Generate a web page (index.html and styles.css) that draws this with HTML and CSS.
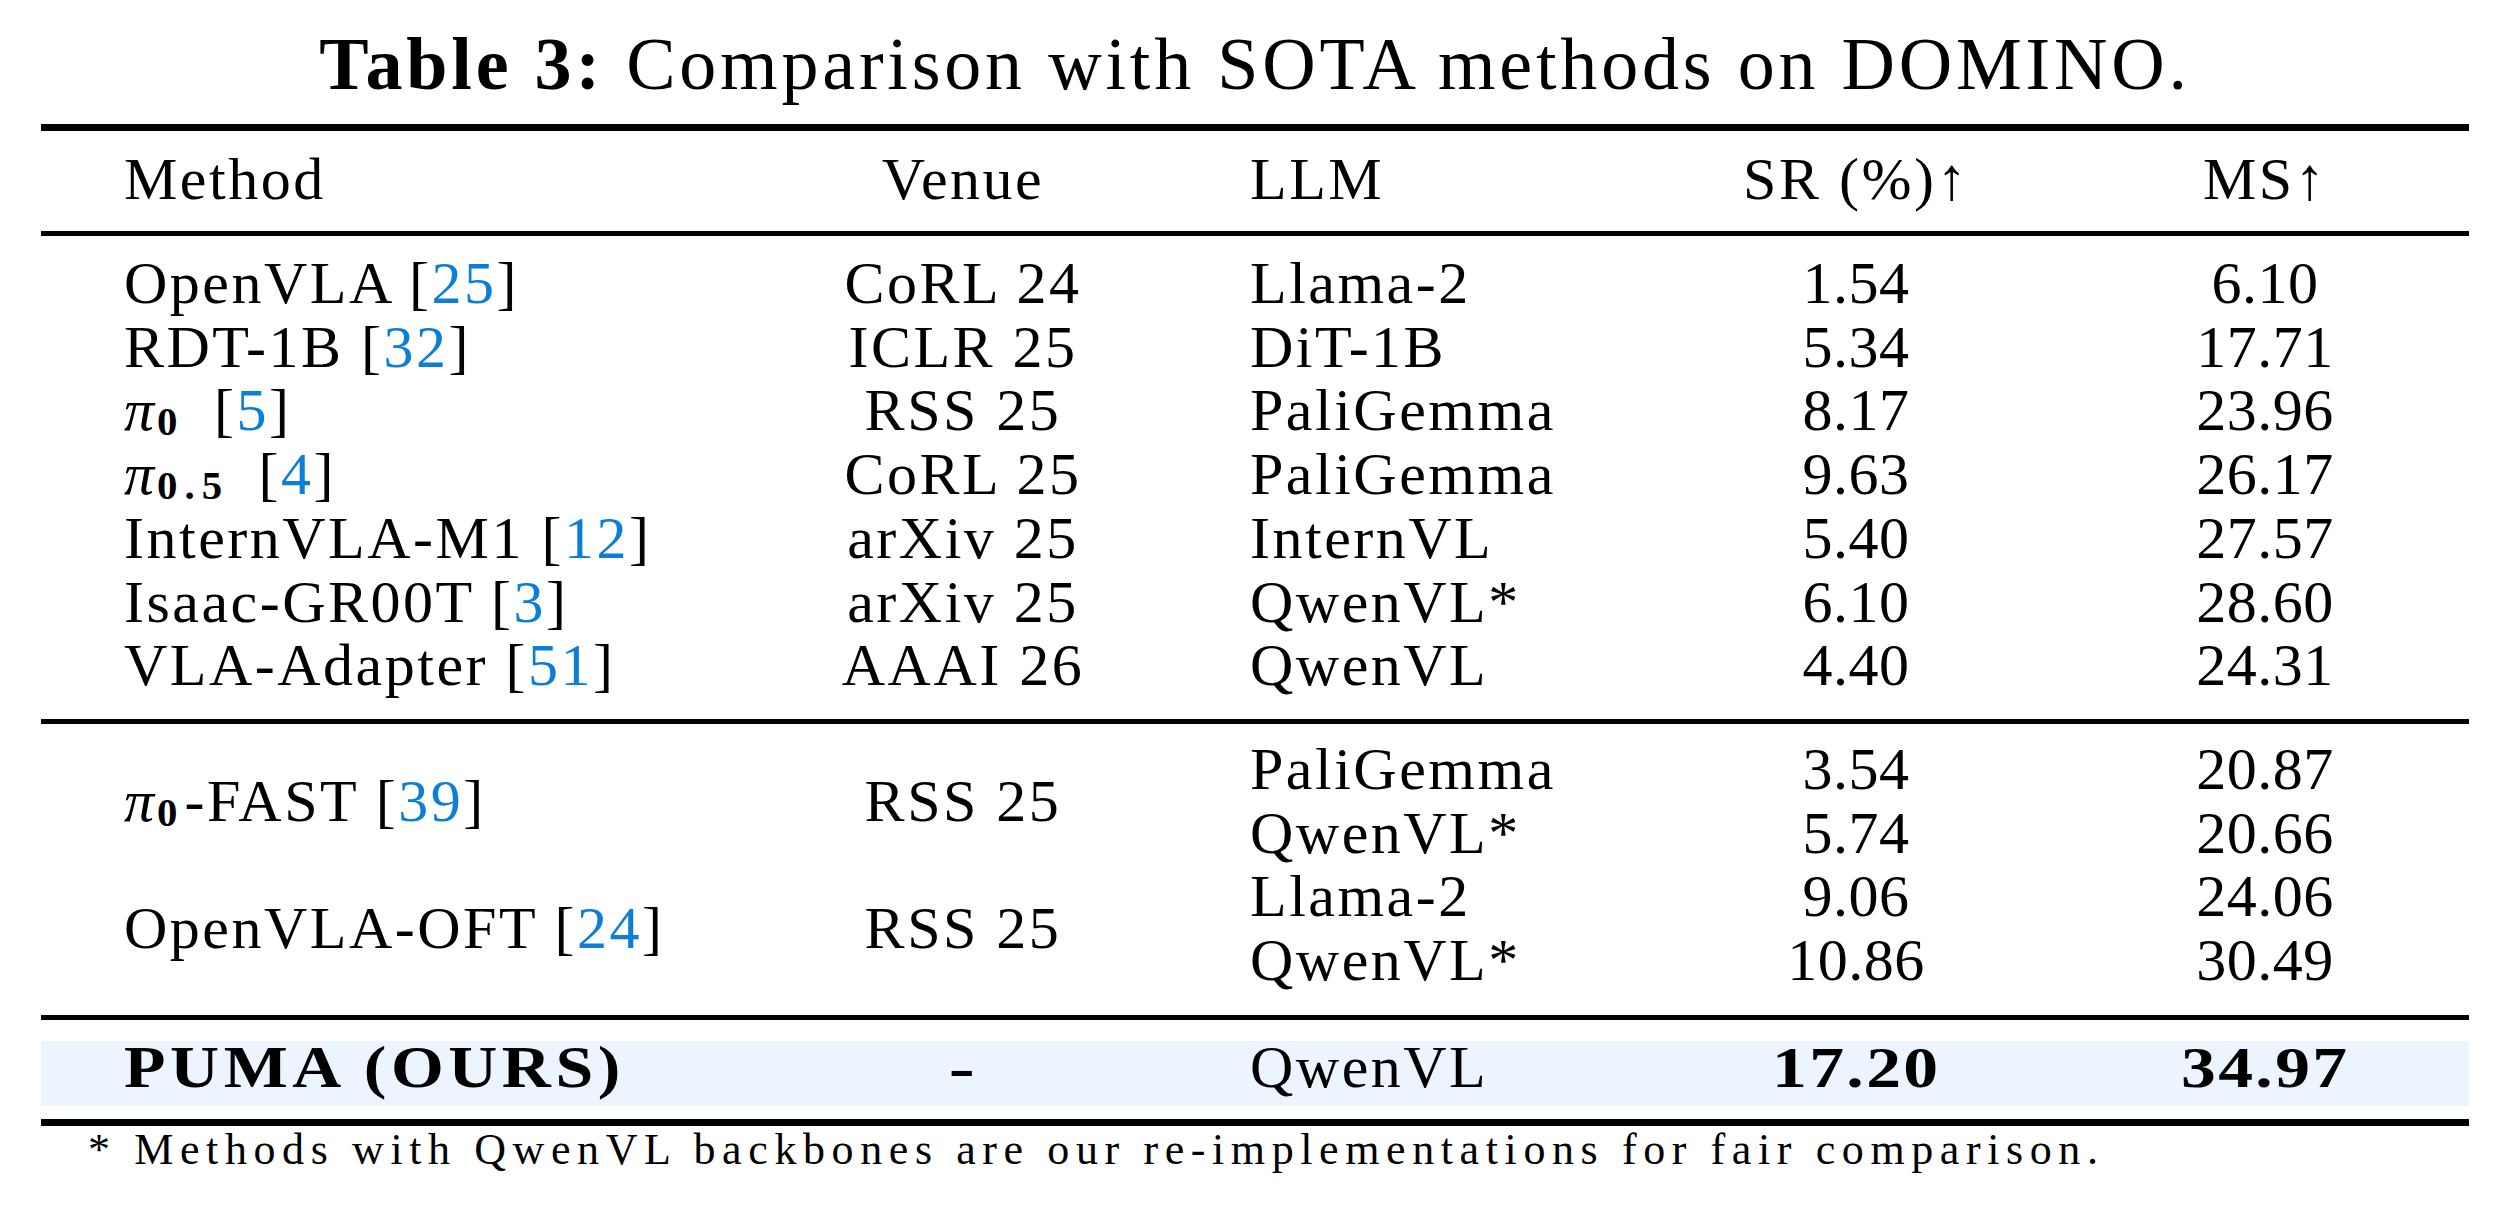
FILE: index.html
```html
<!DOCTYPE html>
<html lang="en">
<head>
<meta charset="utf-8">
<title>Table 3</title>
<link rel="stylesheet" href="styles.css">
</head>
<body>
<div class="page">
  <div class="caption"><span class="cap-label">Table 3:</span> Comparison with SOTA methods on DOMINO.</div>

  <div class="rule rule-thick"></div>

  <div class="grid head">
    <div class="cell c1">Method</div>
    <div class="cell c2">Venue</div>
    <div class="cell c3">LLM</div>
    <div class="cell c4">SR (%)↑</div>
    <div class="cell c5">MS↑</div>
  </div>

  <div class="rule rule-mid"></div>

  <div class="grid group g1">
    <div class="cell c1">OpenVLA [<span class="cite">25</span>]</div>
    <div class="cell c2">CoRL 24</div>
    <div class="cell c3">Llama-2</div>
    <div class="cell c4 num">1.54</div>
    <div class="cell c5 num">6.10</div>

    <div class="cell c1">RDT-1B [<span class="cite">32</span>]</div>
    <div class="cell c2">ICLR 25</div>
    <div class="cell c3">DiT-1B</div>
    <div class="cell c4 num">5.34</div>
    <div class="cell c5 num">17.71</div>

    <div class="cell c1"><span class="pi">π</span><sub class="sub tail">0</sub> [<span class="cite">5</span>]</div>
    <div class="cell c2">RSS 25</div>
    <div class="cell c3">PaliGemma</div>
    <div class="cell c4 num">8.17</div>
    <div class="cell c5 num">23.96</div>

    <div class="cell c1"><span class="pi">π</span><sub class="sub tail">0.5</sub> [<span class="cite">4</span>]</div>
    <div class="cell c2">CoRL 25</div>
    <div class="cell c3">PaliGemma</div>
    <div class="cell c4 num">9.63</div>
    <div class="cell c5 num">26.17</div>

    <div class="cell c1">InternVLA-M1 [<span class="cite">12</span>]</div>
    <div class="cell c2">arXiv 25</div>
    <div class="cell c3">InternVL</div>
    <div class="cell c4 num">5.40</div>
    <div class="cell c5 num">27.57</div>

    <div class="cell c1">Isaac-GR00T [<span class="cite">3</span>]</div>
    <div class="cell c2">arXiv 25</div>
    <div class="cell c3">QwenVL*</div>
    <div class="cell c4 num">6.10</div>
    <div class="cell c5 num">28.60</div>

    <div class="cell c1">VLA-Adapter [<span class="cite">51</span>]</div>
    <div class="cell c2">AAAI 26</div>
    <div class="cell c3">QwenVL</div>
    <div class="cell c4 num">4.40</div>
    <div class="cell c5 num">24.31</div>
  </div>

  <div class="rule rule-mid"></div>

  <div class="grid group g2">
    <div class="cell c1 span2"><span class="pi">π</span><sub class="sub">0</sub>-FAST [<span class="cite">39</span>]</div>
    <div class="cell c2 span2">RSS 25</div>
    <div class="cell c3">PaliGemma</div>
    <div class="cell c4 num">3.54</div>
    <div class="cell c5 num">20.87</div>
    <div class="cell c3">QwenVL*</div>
    <div class="cell c4 num">5.74</div>
    <div class="cell c5 num">20.66</div>

    <div class="cell c1 span2">OpenVLA-OFT [<span class="cite">24</span>]</div>
    <div class="cell c2 span2">RSS 25</div>
    <div class="cell c3">Llama-2</div>
    <div class="cell c4 num">9.06</div>
    <div class="cell c5 num">24.06</div>
    <div class="cell c3">QwenVL*</div>
    <div class="cell c4 num">10.86</div>
    <div class="cell c5 num">30.49</div>
  </div>

  <div class="rule rule-mid"></div>

  <div class="grid ours">
    <div class="cell c1"><span class="wide name">PUMA (OURS)</span></div>
    <div class="cell c2"><span class="wide dash">-</span></div>
    <div class="cell c3">QwenVL</div>
    <div class="cell c4"><span class="wide bnum">17.20</span></div>
    <div class="cell c5"><span class="wide bnum">34.97</span></div>
  </div>

  <div class="rule rule-thick rule-bottom"></div>

  <div class="note">* Methods with QwenVL backbones are our re-implementations for fair comparison.</div>
</div>
</body>
</html>
```

FILE: styles.css
```css
html, body {
  margin: 0;
  padding: 0;
  background: #ffffff;
}

body {
  font-family: "Liberation Serif", "Times New Roman", serif;
  color: #000000;
}

.page {
  width: 2428px;
  margin-left: 41px;
}

.caption {
  margin-top: 24px;
  height: 80px;
  font-size: 74px;
  line-height: 80px;
  letter-spacing: 3.8px;
  text-align: center;
  white-space: nowrap;
}

.cap-label {
  font-weight: bold;
}

.rule {
  background: #000000;
}

.rule-thick {
  height: 7px;
  margin-top: 20px;
}

.rule-mid {
  height: 5px;
}

.grid {
  display: grid;
  grid-template-columns: 719px 406px 434px 512px 306px;
  grid-auto-rows: 63.7px;
  font-size: 60px;
  line-height: 63.7px;
  letter-spacing: 2.5px;
  white-space: nowrap;
}

.head {
  padding-top: 17px;
  padding-bottom: 19.4px;
}

.g1 {
  padding-top: 16px;
  padding-bottom: 21px;
}

.g2 {
  padding-top: 14px;
  padding-bottom: 22.3px;
}

.ours {
  margin-top: 21px;
  grid-auto-rows: 52px;
  line-height: 52px;
  padding-bottom: 13px;
  background: #ecf4fe;
}

.rule-bottom {
  margin-top: 13px;
}

.c1 {
  padding-left: 83px;
}

.c2 {
  text-align: center;
}

.c3 {
  padding-left: 84px;
}

.c4,
.c5 {
  text-align: center;
}

.num {
  letter-spacing: 0.5px;
}

.span2 {
  grid-row: span 2;
  align-self: center;
}

.cite {
  color: #0b7ed8;
}

.pi {
  font-style: italic;
  letter-spacing: 0;
}

.sub {
  font-size: 0.68em;
  font-weight: bold;
  line-height: 0;
  vertical-align: -0.12em;
  letter-spacing: 7px;
  margin-left: 3px;
  margin-right: 0;
}

.sub.tail {
  margin-right: 12px;
}

.wide {
  display: inline-block;
  font-weight: bold;
}

.name {
  font-size: 59px;
  letter-spacing: 4px;
  transform: scaleX(1.15);
  transform-origin: left center;
}

.bnum {
  font-size: 58px;
  letter-spacing: 2px;
  transform: scaleX(1.2);
  transform-origin: center center;
}

.dash {
  font-size: 60px;
  transform: scaleX(1.3);
}

.note {
  margin-top: 1px;
  padding-left: 47px;
  font-size: 44px;
  line-height: 46px;
  letter-spacing: 6.6px;
  white-space: nowrap;
}
```
